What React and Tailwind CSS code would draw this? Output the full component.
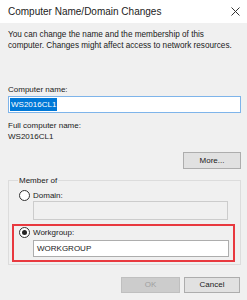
import React from 'react';

const Radio = ({ checked }) => (
  <span className="w-[11px] h-[11px] rounded-full border border-[#333] bg-white flex items-center justify-center shrink-0">
    {checked && <span className="w-[5px] h-[5px] rounded-full bg-[#222]" />}
  </span>
);

export default function App() {
  return (
    <div className="w-[247px] h-[300px] bg-[#f0f0f0] text-[#1a1a1a] overflow-hidden" style={{ fontFamily: '"Liberation Sans", Arial, sans-serif' }}>
      {/* title bar */}
      <div className="h-[23px] bg-white flex items-center justify-between pl-[8px] pr-[6px]">
        <span className="text-[10px] leading-none text-[#222]">Computer Name/Domain Changes</span>
        <svg width="9" height="9" viewBox="0 0 9 9" className="mr-[1px]">
          <path d="M0.5 0.5 L8.5 8.5 M8.5 0.5 L0.5 8.5" stroke="#333" strokeWidth="1" />
        </svg>
      </div>

      <div className="flex flex-col pl-[8px] pr-[6px] text-[8px] leading-[11px]">
        <p className="mt-[6px] text-[8.2px]">
          You can change the name and the membership of this
          <br />
          computer. Changes might affect access to network resources.
        </p>

        <span className="mt-[33px]">Computer name:</span>
        <div className="mt-[1px] h-[17px] border border-[#7eb4ea] bg-white flex items-center pl-[1px]">
          <span className="bg-[#0078d7] text-white px-[1px] leading-[13px]">WS2016CL1</span>
        </div>

        <span className="mt-[7px]">Full computer name:</span>
        <span>WS2016CL1</span>

        <button className="self-end mt-[10px] w-[58px] h-[17px] bg-[#e1e1e1] border border-[#adadad] text-[8px] leading-none">
          More...
        </button>

        <fieldset className="mt-[6px] border border-[#dcdcdc] pl-[3px] pr-[5px] pb-[2px] h-[90px]">
          <legend className="ml-[6px] px-[1px] leading-[11px]">Member of</legend>
          <div className="mt-[3px] flex items-center gap-[3px] pl-[7px] h-[12px]">
            <Radio />
            <span>Domain:</span>
          </div>
          <div className="ml-[21px] mr-[7px] h-[19px] border border-[#cccccc] bg-[#f0f0f0]" />
          <div className="mt-[4px] border-2 border-[#e8393f] h-[38px] flex flex-col">
            <div className="flex items-center gap-[3px] pl-[5px] h-[12px]">
              <Radio checked />
              <span>Workgroup:</span>
            </div>
            <div className="mt-[2px] ml-[19px] mr-[4px] h-[17px] border border-[#adadad] bg-white flex items-center pl-[3px]">
              WORKGROUP
            </div>
          </div>
        </fieldset>

        <div className="mt-[12px] flex justify-end gap-[4px] pr-[1px]">
          <button className="w-[59px] h-[16px] bg-[#cccccc] border border-[#bfbfbf] text-[#a0a0a0] text-[8px] leading-none">OK</button>
          <button className="w-[56px] h-[16px] bg-[#e1e1e1] border border-[#adadad] text-[8px] leading-none">Cancel</button>
        </div>
      </div>
    </div>
  );
}
